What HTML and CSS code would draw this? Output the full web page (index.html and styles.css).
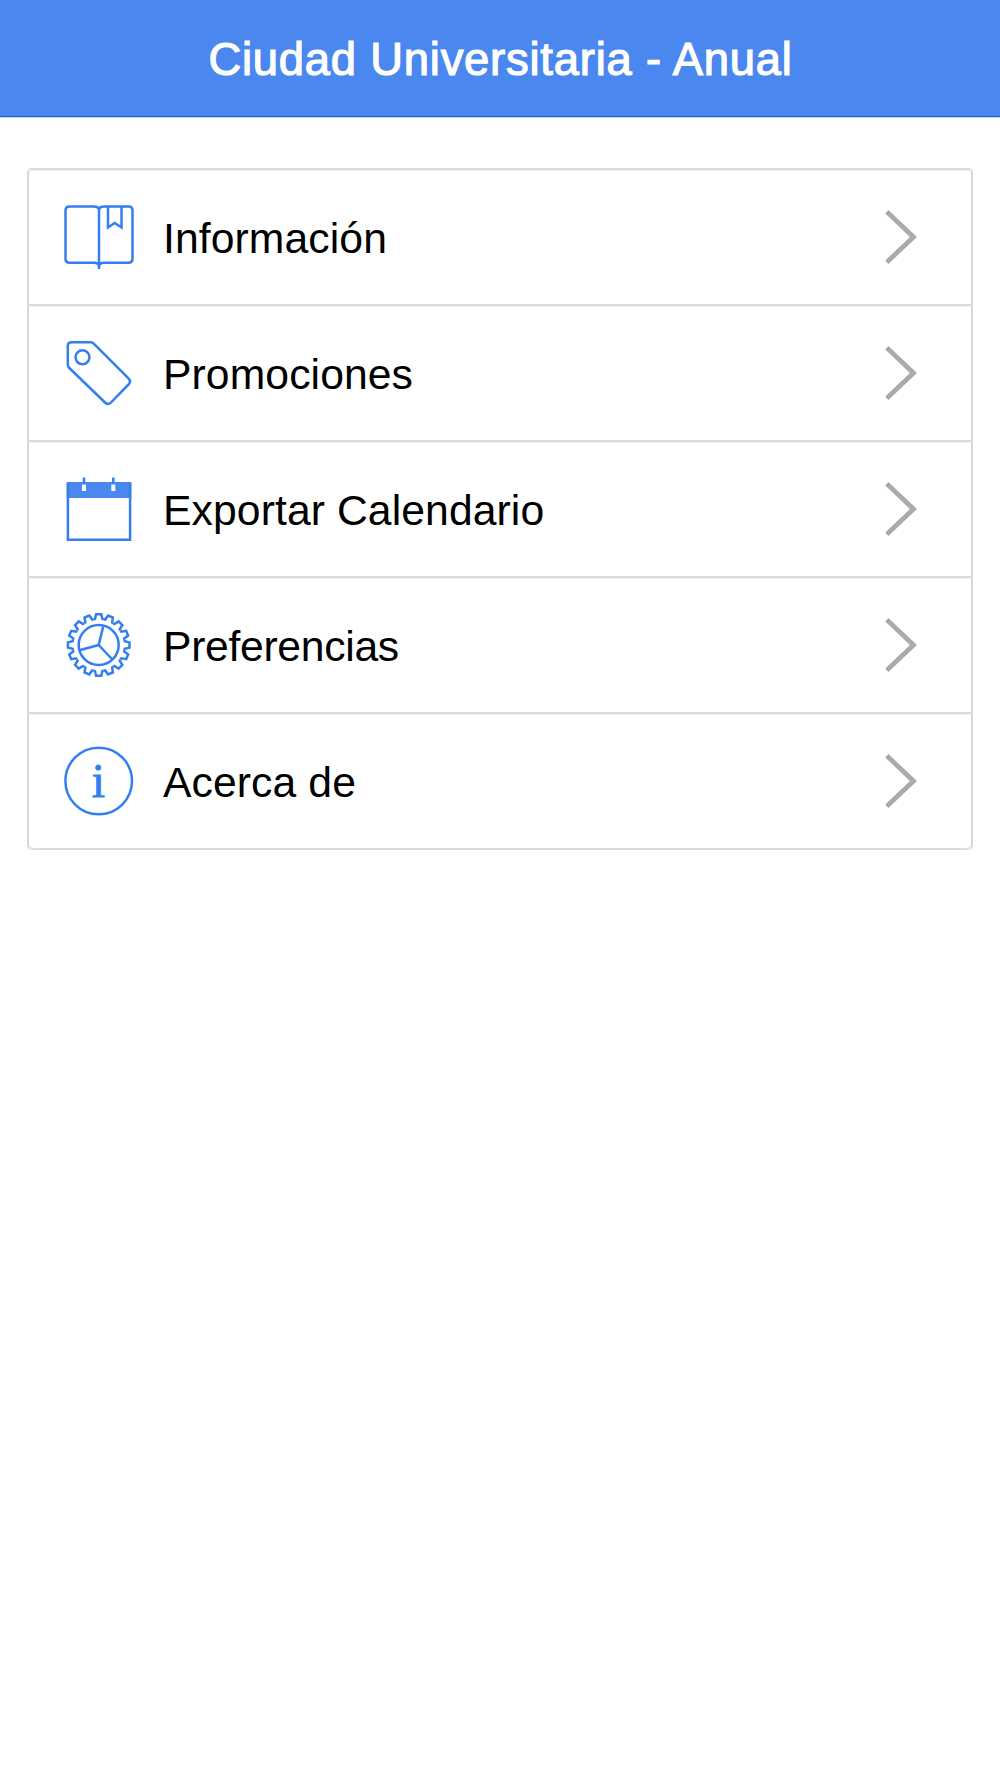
FILE: index.html
```
<!DOCTYPE html>
<html lang="es">
<head>
    <meta charset="UTF-8">
    <meta name="viewport" content="width=device-width, initial-scale=1.0">
    <title>Ciudad Universitaria - Anual</title>
    <link rel="stylesheet" href="styles.css">
</head>
<body>
    <header class="bar">
        <h1 class="title">Ciudad Universitaria - Anual</h1>
    </header>

    <ul class="list">
        <li class="item">
            <svg class="icon" viewBox="0 0 72 72">
                <path d="M36 68V9.500C36 7 34 5.500 31 5.500H6.500Q2.500 5.500 2.500 9.500V57.700Q2.500 61.700 6.500 61.700H31C34 61.700 36 63 36 66C36 63 38 61.700 41 61.700H65.500Q69.500 61.700 69.500 57.700V9.500Q69.500 5.500 65.500 5.500H41C38 5.500 36 7 36 9.500"/>
                <path d="M45 5.500V26.500L51.700 22L58.500 26.500V5.500"/>
            </svg>
            <span class="label">Información</span>
            <svg class="arrow" viewBox="0 0 40 72"><path d="M5.800 10.800L32.500 36L5.800 61.200"/></svg>
        </li>
        <li class="item">
            <svg class="icon" viewBox="0 0 72 72">
                <path d="M8.500 5.300H27.500Q29.500 5.300 31 6.800L65.500 41.300Q68.500 44.500 65.500 47.500L48 65.500Q45 68.500 42 65.500L6.300 31Q4.800 29.500 4.800 27.500V9Q4.800 5.300 8.500 5.300Z"/>
                <circle cx="19.500" cy="20.300" r="7"/>
            </svg>
            <span class="label">Promociones</span>
            <svg class="arrow" viewBox="0 0 40 72"><path d="M5.800 10.800L32.500 36L5.800 61.200"/></svg>
        </li>
        <li class="item">
            <svg class="icon" viewBox="0 0 72 72">
                <path class="fill" d="M3.700 9H68.300V25H3.700Z"/>
                <path d="M4.900 10V66.800H67.100V10"/>
                <path d="M21 4.500V10M50.300 4.500V10"/>
                <path class="hole" d="M21 11.500V18M50.300 11.500V18"/>
            </svg>
            <span class="label">Exportar Calendario</span>
            <svg class="arrow" viewBox="0 0 40 72"><path d="M5.800 10.800L32.500 36L5.800 61.200"/></svg>
        </li>
        <li class="item">
            <svg class="icon" viewBox="0 0 72 72">
                <defs>
                    <path id="tooth" d="M-5.110 -25.700L-3.700 -26L-2.600 -30.800H2.600L3.700 -26L5.110 -25.700"/>
                    <g id="teeth">
                        <use href="#tooth"/>
                        <use href="#tooth" transform="rotate(22.5)"/>
                        <use href="#tooth" transform="rotate(45)"/>
                        <use href="#tooth" transform="rotate(67.5)"/>
                    </g>
                </defs>
                <g transform="translate(35.700 36)">
                    <use href="#teeth"/>
                    <use href="#teeth" transform="rotate(90)"/>
                    <use href="#teeth" transform="rotate(180)"/>
                    <use href="#teeth" transform="rotate(270)"/>
                    <circle r="20"/>
                    <path d="M0 0L4.700 -19.400M0 0L-19.200 5.200M0 0L13.700 14.500"/>
                </g>
            </svg>
            <span class="label tight">Preferencias</span>
            <svg class="arrow" viewBox="0 0 40 72"><path d="M5.800 10.800L32.500 36L5.800 61.200"/></svg>
        </li>
        <li class="item">
            <svg class="icon" viewBox="0 0 72 72">
                <circle cx="35.700" cy="36" r="33.300"/>
                <text class="info" x="35.500" y="51.500" text-anchor="middle">i</text>
            </svg>
            <span class="label">Acerca de</span>
            <svg class="arrow" viewBox="0 0 40 72"><path d="M5.800 10.800L32.500 36L5.800 61.200"/></svg>
        </li>
    </ul>
</body>
</html>
```
FILE: styles.css
```
*{
    margin: 0;
    padding: 0;
    box-sizing: border-box;
}
body{
    background-color: #fff;
    color: #000;
    font-family: "Liberation Sans", Arial, sans-serif;
}
.bar{
    height: 117px;
    padding-top: 34px;
    background-color: #4a87ee;
    border-bottom: 1px solid #145fd7;
    box-shadow: 0 1px #c5d9fa;
    text-align: center;
}
.title{
    padding-left: 1px;
    color: #fff;
    font-size: 45.33px;
    font-weight: normal;
    line-height: 52px;
    letter-spacing: 0.8px;
    -webkit-text-stroke: 1.2px #fff;
}
.list{
    margin: 51px 27px 0;
    border: 2px solid #d9d9d9;
    border-bottom: none;
    border-radius: 5px;
    list-style: none;
}
.item{
    display: flex;
    align-items: center;
    height: 136px;
    padding: 0 50px 0 34px;
    border-bottom: 2px solid #dbdbdb;
    box-shadow: inset 0 1px #f0f0f0;
}
.item:last-child{
    border-radius: 0 0 5px 5px;
}
.icon{
    width: 72px;
    height: 72px;
    fill: none;
    stroke: #337ff0;
    stroke-width: 2.5;
}
.icon .fill{
    fill: #4a87ee;
    stroke: none;
}
.icon .hole{
    stroke: #fff;
    stroke-width: 4;
}
.icon .info{
    fill: #337ff0;
    stroke-width: 0.8;
    font-family: "Liberation Serif", serif;
    font-size: 48px;
}
.label{
    flex: 1;
    padding-top: 2px;
    margin-left: 28px;
    font-size: 42.67px;
    letter-spacing: 0.1px;
}
.tight{
    letter-spacing: -0.3px;
}
.arrow{
    width: 40px;
    height: 72px;
    fill: none;
    stroke: #aaa;
    stroke-width: 4.8;
}
```
